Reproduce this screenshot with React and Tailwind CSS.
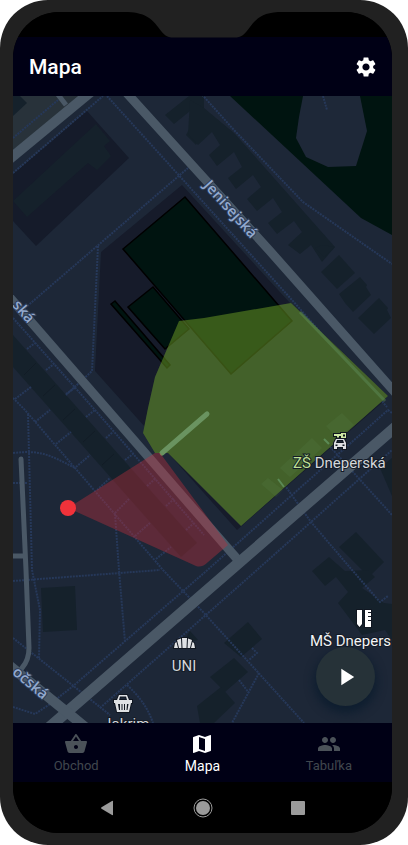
import React from 'react';
import { MdSettings, MdShoppingBasket, MdMap, MdPeople, MdPlayArrow } from 'react-icons/md';

const FOOTPATHS = [
  'M13 173 103 96',
  'M107 96 292 300 387 407',
  'M25 308 188 168',
  'M98 246 92 371 66 395',
  'M196 88 234 130 303 202 392 264',
  'M323 96 327 110',
  'M13 318 95 410 204 535',
  'M13 398 25 410 163 570 204 613 304 723',
  'M28 414 32 570 40 610 39 658',
  'M13 453C40 450 48 454 75 468',
  'M13 483H28',
  'M115 514 119 570 125 642',
  'M13 581 160 570',
  'M13 638 110 715',
  'M13 707 35 714 50 704 72 687 204 573 388 410 392 413',
  'M100 708 257 570 392 450',
  'M127 685Q146 702 153 723',
  'M281 480 311 522 352 570 380 602 388 596',
  'M324 440 392 515',
  'M259 673 232 723',
  'M239 680 249 693',
  'M252 648 257 653 249 660',
  'M13 138 58 100',
];

const TICKS =
  'M15 399 31 387M35 422 50 410M56 444 71 432M76 467 90 455M97 490 110 478M115 513 129 499M135 536 150 523M156 559 171 547' +
  'M27 349 35 343M46 370 54 364M66 394 76 387M86 417 95 410M106 438 113 432M125 460 133 454M147 486 156 478M166 506 174 499M186 530 194 523';

const BUILDINGS = [
  '13,96 20,96 27,103 13,116',
  '96,124 110,141 104,146 111,156 97,170 88,163 27,217 13,201',
  '165,115 189,96 204,96 204,128 196,145 186,135 193,122 190,111 174,124',
  '204,108 234,133 335,247 322,262 311,245 300,254 288,245 302,232 294,221 277,234 268,223 282,212 273,198 257,211 247,199 261,187 253,175 236,189 228,178 242,167 234,152 217,166 209,155 220,145 212,132 198,145 188,134 190,100',
  '315,248 322,245 335,247 324,257',
  '339,255 355,273 337,289 321,272',
  '360,277 367,285 366,287 371,295 353,312 345,303 339,294',
  '379,298 388,308 387,310 391,318 374,334 358,318',
  '13,335 197,543 181,557 13,367',
  '41,588 75,586 77,630 43,632',
  '248,622 262,639 241,657 224,643',
  '234,658 248,672 225,692 210,677',
  '221,687 235,703 214,723 200,723 197,706',
  '356,532 384,562 369,577 339,547',
  '329,557 345,571 368,570 375,577 362,588 384,603 392,604 392,640 385,630 362,635 338,603 348,592 336,577 325,586 312,571',
  '380,468 392,458 392,496',
  '190,631 198,640 182,644',
];

const ZONE = 'M179 321 204 318 291 303 388 396 241 526 168 453H155L143 433 148 408 155 377Z';

function CityMap() {
  return (
    <svg
      className="size-full font-[Roboto,sans-serif]"
      viewBox="13 96 379 627"
      preserveAspectRatio="xMidYMid slice"
      role="img"
      aria-label="Mapa"
    >
      <rect x="13" y="96" width="379" height="627" fill="#1d2737" />
      <path d="M13 96H86L13 156Z" fill="#28323a" />
      <path d="M87 111 129 158 36 246 13 221V174Z" fill="#151b2a" />
      <path d="M230 96 361 218 392 235V96Z" fill="#001410" />
      <path d="M303 96 299 117 296 138 306 157 328 167 356 166 367 131 360 96Z" fill="#1e2838" />
      <path d="M182 185 101 252 95 371 237 530 385 400 290 303Z" fill="#161b2a" />

      <g fill="#15212b">
        {BUILDINGS.map((points) => (
          <polygon key={points} points={points} />
        ))}
      </g>
      <path d="M24 375 36 363M43 396 55 385M63 420 75 409M83 442 95 431M102 465 114 454" stroke="#121c26" />

      <g fill="none" stroke="#263859" strokeWidth="2" strokeDasharray="2 1">
        {FOOTPATHS.map((d) => (
          <path key={d} d={d} />
        ))}
        <path d={TICKS} />
      </g>

      <g fill="none" stroke="#4a5866">
        <path d="M0 167 98 86" strokeWidth="10" />
        <path d="M56 92 66 105" strokeWidth="5" />
        <path d="M124 90 269 250 400 398" strokeWidth="9" />
        <path d="M5 292 238 560" strokeWidth="9" />
        <path d="M21 459 26 570 29 648Q29 660 22 668" strokeWidth="5" strokeLinecap="round" />
        <path d="M13 556H25" strokeWidth="5" />
        <path d="M400 423 234 567 45 731" strokeWidth="11" />
        <path d="M5 662 68 713 90 731" strokeWidth="10" />
      </g>

      <path d={ZONE} fill="#1d2737" />
      <g fill="#001410" stroke="#000" strokeWidth="1.5">
        <path d="M185 197 123 249 231 374 292 321Z" />
        <path d="M153 287 128 307 165 349 189 329Z" />
        <path d="M115 301 111 304 167 368 170 365Z" />
      </g>
      <path d={ZONE} fill="#5d8921" fillOpacity="0.6" />
      <path d="M300 312 385 401" stroke="#5b8a55" strokeOpacity="0.5" strokeWidth="3" />
      <g fill="#5b8a55" fillOpacity="0.15">
        <path d="M326 426 342 413 354 425 338 439Z" />
        <path d="M280 468 312 438 322 448 290 477Z" />
        <path d="M261 484 268 478 283 490 276 497Z" />
      </g>
      <path d="M324 439 329 444M278 479 284 487" stroke="#5b8a55" strokeWidth="2" />
      <path d="M207 414 162 453" stroke="#6a9360" strokeWidth="5" strokeLinecap="round" />
      <path d="M68 508 155 453H160L228 545 208 562Q202 568 196 566Z" fill="#be303c" fillOpacity="0.4" />
      <circle cx="68" cy="508" r="8" fill="#f0323a" />

      <g
        fill="#93a9cd"
        stroke="#2a3a55"
        strokeWidth="2"
        paintOrder="stroke"
        fontSize="15"
        className="font-[Open_Sans,sans-serif] font-semibold"
      >
        <text transform="translate(203 186) rotate(48)">Jenisejská</text>
        <text transform="translate(28 324) rotate(49)" textAnchor="end">ská</text>
        <text transform="translate(43 700) rotate(40)" textAnchor="end">očská</text>
      </g>

      <g fill="#d3d6da" stroke="#141b26" strokeWidth="2" paintOrder="stroke" fontSize="15">
        <text x="293" y="468">
          <tspan fill="#bfe093">ZŠ</tspan> Dneperská
        </text>
        <text x="310" y="646" fill="#f4f5f6">MŠ Dnepers</text>
        <text x="184" y="671" textAnchor="middle">UNI</text>
        <text x="103" y="729">Jokrim</text>
      </g>

      <g stroke="#101620" strokeWidth="2" paintOrder="stroke">
        <path
          fillRule="evenodd"
          fill="#cfe9a4"
          d="M334 434H341V433H346V438H341V436H339V437.500H337V436H334ZM343 434.500V436.500H345V434.500Z"
        />
        <path
          fillRule="evenodd"
          fill="#dfe1e4"
          d="M336 439H344L346 443V449H343V447H337V449H334V443ZM337 440 336 443H344L343 440ZM335.500 444.500V446H337.500V444.500ZM342.500 444.500V446H344.500V444.500Z"
        />
        <path
          fill="#dfe1e4"
          d="M182 638H187L186.500 648H182.500ZM177 640 181 638.500 181.500 648H179ZM188 638.500 192 640 190 648H187.500ZM175 643 176.500 642 178 648H174ZM194 643 192.500 642 191 648H195Z"
        />
        <path fill="#fff" d="M357 610H362V624L359.500 627 357 624ZM365 610H371V612H368V613H371V616H368V617H371V620H368V621H371V627H365Z" />
        <path
          fill="#dfe1e4"
          fillRule="evenodd"
          d="M117 700 119 695H127L129 700H132V703H131L129 712H117L115 703H114V700ZM120 696.500 119 700H127L126 696.500ZM118 704 119 710H120V704ZM121.500 704V710H122.500V704ZM124 704V710H125V704ZM127 704 126.500 710H127.500L128.500 704Z"
        />
      </g>
    </svg>
  );
}

function Tab({ icon: Icon, label, active }) {
  return (
    <button
      type="button"
      aria-current={active ? 'page' : undefined}
      className={
        active
          ? 'flex flex-1 flex-col items-center pt-[9px] text-sm leading-5 text-white'
          : 'flex flex-1 flex-col items-center pt-[9px] text-[13px] leading-5 text-[#40474e]'
      }
    >
      <Icon className={active ? 'size-6' : 'size-6 text-[#4b5259]'} />
      <span>{label}</span>
    </button>
  );
}

export default function App() {
  return (
    <div className="mx-auto flex min-h-screen w-full max-w-md flex-col rounded-[48px] bg-[#212121] py-3 pr-4 pl-[13px] font-[Roboto,sans-serif]">
      <div className="relative flex flex-1 flex-col overflow-hidden rounded-[46px] bg-black">
        <div className="h-[25px] shrink-0 bg-black" />
        <svg className="absolute top-0 left-1/2 h-[26px] w-[150px] -translate-x-1/2" viewBox="0 0 150 26" aria-hidden="true">
          <path d="M0 0C18 1 24 7 30 15C36 23 38 25.500 46 25.500H106C114 25.500 116 23 122 15C128 7 134 1 150 0Z" fill="#212121" />
        </svg>

        <header className="flex h-[59px] shrink-0 items-center justify-between bg-[#000015] pr-3.5 pl-4 text-white">
          <h1 className="text-[21px] leading-6 font-medium">Mapa</h1>
          <button type="button" aria-label="Nastavenia">
            <MdSettings className="size-6" />
          </button>
        </header>

        <main className="relative grid flex-1">
          <CityMap />
          <button
            type="button"
            aria-label="Spustiť"
            className="absolute right-[17px] bottom-[17px] flex size-[59px] items-center justify-center rounded-full bg-[#263238] text-white shadow-[0_5px_10px_2px_rgba(10,28,45,0.8)]"
          >
            <MdPlayArrow className="size-7" />
          </button>
        </main>

        <nav className="flex h-[59px] shrink-0 bg-[#000015]">
          <Tab icon={MdShoppingBasket} label="Obchod" />
          <Tab icon={MdMap} label="Mapa" active />
          <Tab icon={MdPeople} label="Tabuľka" />
        </nav>

        <div className="flex h-[51px] shrink-0 items-center justify-between bg-black px-[82px]">
          <button type="button" aria-label="Späť">
            <svg className="size-6" viewBox="0 0 24 24" fill="#9b9b9b">
              <path d="M18 5.500V18.500Q18 19.500 17 19L6.500 12.700Q5.500 12 6.500 11.300L17 5Q18 4.500 18 5.500Z" />
            </svg>
          </button>
          <button type="button" aria-label="Domov">
            <svg className="size-6" viewBox="0 0 24 24">
              <circle cx="12" cy="12" r="9" fill="none" stroke="#9b9b9b" />
              <circle cx="12" cy="12" r="7" fill="#9b9b9b" />
            </svg>
          </button>
          <button type="button" aria-label="Prehľad aplikácií">
            <svg className="size-6" viewBox="0 0 24 24">
              <rect x="5" y="5" width="14" height="14" rx="1" fill="#9b9b9b" />
            </svg>
          </button>
        </div>
      </div>
    </div>
  );
}
